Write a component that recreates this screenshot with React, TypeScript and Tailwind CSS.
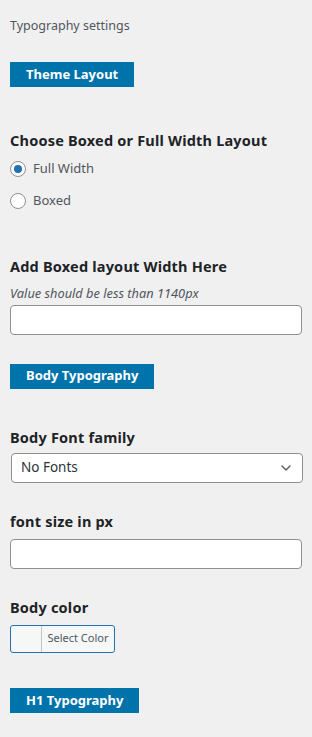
import { ChevronDown } from 'lucide-react';

function SectionHeader({ title }: { title: string }) {
    return (
        <div className="inline-flex h-[25px] items-center bg-[#0073aa] px-4 text-[13px] font-bold text-white">
            {title}
        </div>
    );
}

function Radio({ label, checked }: { label: string; checked?: boolean }) {
    return (
        <label className="flex items-center gap-[7px] text-[13px] text-[#50575e]">
            <span className="flex h-4 w-4 items-center justify-center rounded-full border border-[#8c8f94] bg-white">
                {checked && <span className="h-2 w-2 rounded-full bg-[#2271b1]" />}
            </span>
            {label}
        </label>
    );
}

export default function App() {
    return (
        <div
            className="min-h-[737px] w-[312px] bg-[#f0f0f0] px-[10px] pt-[18px] text-[#1d2327]"
            style={{ fontFamily: '"Noto Sans", "Open Sans", sans-serif' }}
        >
            <p className="text-[12.5px] leading-[16px] text-[#50575e]">Typography settings</p>

            <div className="mt-[27px]">
                <SectionHeader title="Theme Layout" />
            </div>

            <h3 className="mt-[44px] text-[14.5px] font-bold leading-[18px] tracking-[0.2px]">Choose Boxed or Full Width Layout</h3>
            <div className="mt-[10px] flex flex-col gap-[12px]">
                <Radio label="Full Width" checked />
                <Radio label="Boxed" />
            </div>

            <h3 className="mt-[47px] text-[14.5px] font-bold leading-[18px] tracking-[0.2px]">Add Boxed layout Width Here</h3>
            <p className="mt-[10px] text-[12.8px] italic leading-[16px] text-[#50575e]">Value should be less than 1140px</p>
            <input
                type="text"
                className="mt-[4px] h-[30px] w-[292px] rounded-[4px] border border-[#8c8f94] bg-white px-2 text-[13px]"
            />

            <div className="mt-[27px]">
                <SectionHeader title="Body Typography" />
            </div>

            <h3 className="mt-[39px] text-[14.5px] font-bold leading-[18px] tracking-[0.2px]">Body Font family</h3>
            <div className="ml-px mt-[7px] flex h-[30px] w-[292px] items-center justify-between rounded-[4px] border border-[#8c8f94] bg-white pl-[9px] pr-[8px] text-[13.5px] text-[#2c3338]">
                <span>No Fonts</span>
                <ChevronDown size={16} strokeWidth={2} className="text-[#50575e]" />
            </div>

            <h3 className="mt-[29px] text-[14.5px] font-bold leading-[18px] tracking-[0.2px]">font size in px</h3>
            <input
                type="text"
                className="mt-[9px] h-[30px] w-[292px] rounded-[4px] border border-[#8c8f94] bg-white px-2 text-[13px]"
            />

            <h3 className="mt-[29px] text-[14.5px] font-bold leading-[18px] tracking-[0.2px]">Body color</h3>
            <div className="mt-[9px] flex h-[28px] w-[105px] overflow-hidden rounded-[3px] border border-[#2271b1] bg-[#f6f7f7]">
                <span className="w-[31px] border-r border-[#c3c4c7]" />
                <span className="flex flex-1 items-center justify-center text-[11px] text-[#50575e]">Select Color</span>
            </div>

            <div className="mt-[34px]">
                <SectionHeader title="H1 Typography" />
            </div>
        </div>
    );
}
